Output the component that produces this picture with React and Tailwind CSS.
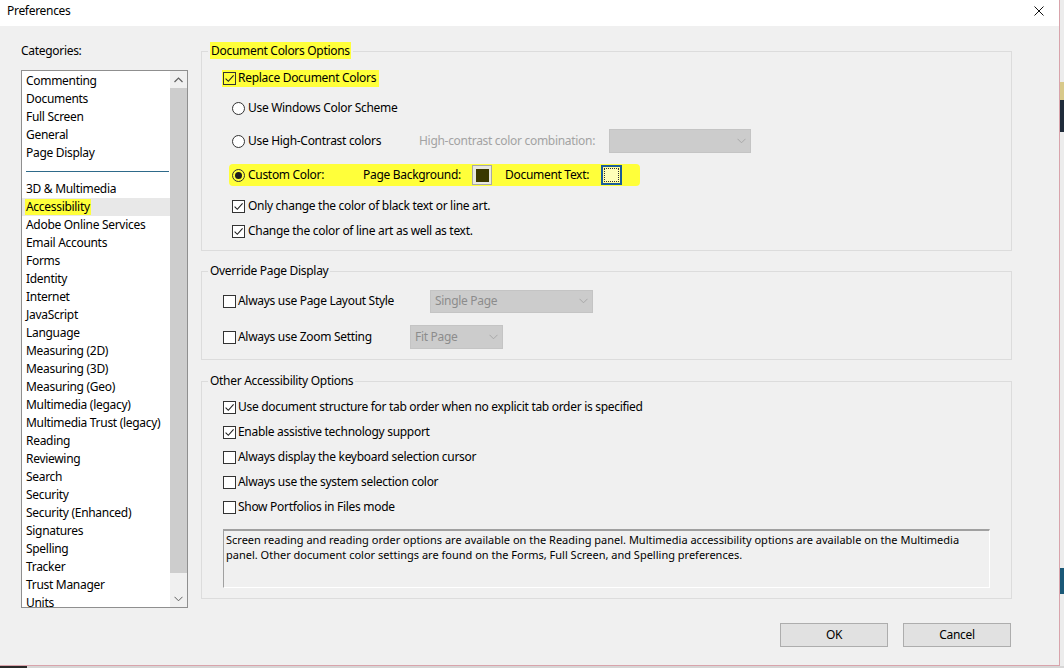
import React from 'react'

const font = { fontFamily: '"Segoe UI", "Noto Sans", sans-serif' }

const categories = [
  'Commenting', 'Documents', 'Full Screen', 'General', 'Page Display', '---',
  '3D & Multimedia', 'Accessibility', 'Adobe Online Services', 'Email Accounts', 'Forms',
  'Identity', 'Internet', 'JavaScript', 'Language', 'Measuring (2D)', 'Measuring (3D)',
  'Measuring (Geo)', 'Multimedia (legacy)', 'Multimedia Trust (legacy)', 'Reading',
  'Reviewing', 'Search', 'Security', 'Security (Enhanced)', 'Signatures', 'Spelling',
  'Tracker', 'Trust Manager', 'Units',
]

function Check({ checked, marked }) {
  return (
    <span className={'flex h-[13px] w-[13px] shrink-0 items-center justify-center border border-[#333333] ' + (marked ? 'bg-[#ffff3a]' : 'bg-white')}>
      {checked && (
        <svg width="11" height="11" viewBox="0 0 11 11">
          <path d="M1.6 5.6 L4.3 8.3 L9.6 2.4" fill="none" stroke="#1e1e1e" strokeWidth="1.1" />
        </svg>
      )}
    </span>
  )
}

function Radio({ checked, marked }) {
  return (
    <span className={'flex h-[13px] w-[13px] shrink-0 items-center justify-center rounded-full border border-[#333333] ' + (marked ? 'bg-[#ffff3a]' : 'bg-white')}>
      {checked && <span className="h-[7px] w-[7px] rounded-full bg-[#1e1e1e]" />}
    </span>
  )
}

function Chevron({ color = '#8a8a8a' }) {
  return (
    <svg width="9" height="6" viewBox="0 0 9 6">
      <path d="M0.5 0.8 L4.5 4.8 L8.5 0.8" fill="none" stroke={color} strokeWidth="1" />
    </svg>
  )
}

function DisabledSelect({ width, height, text }) {
  return (
    <div
      className="flex shrink-0 items-center border border-[#c4c4c4] bg-[#cccccc] text-[#8c8c8c]"
      style={{ width, height }}
    >
      <span className="flex-1 pl-[4px]">{text}</span>
      <span className="flex w-[18px] justify-center">
        <Chevron color="#a8a8a8" />
      </span>
    </div>
  )
}

function Row({ children, className = '' }) {
  return <div className={'flex h-[20px] items-center ' + className}>{children}</div>
}

function Group({ title, className, children }) {
  return (
    <fieldset className={'border border-[#dcdcdc] ' + className}>
      <legend className="ml-[6px] px-[2px] leading-[16px]">{title}</legend>
      {children}
    </fieldset>
  )
}

function CategoryList() {
  return (
    <div className="flex h-[538px] w-[167px] overflow-hidden border border-[#8f8f8f] bg-white">
      <div className="flex-1 pt-[1px]">
        {categories.map((c, i) =>
          c === '---' ? (
            <div key={i} className="flex h-[18px] items-center pl-[4px] pr-[1px]">
              <div className="h-px flex-1 bg-[#2e6a8a]" />
            </div>
          ) : c === 'Accessibility' ? (
            <div key={i} className="flex h-[18px] items-center bg-[#e8e8e8] pl-[3px]">
              <span className="bg-[#ffff3a] px-[1px] leading-[16px]">{c}</span>
            </div>
          ) : (
            <div key={i} className="h-[18px] whitespace-nowrap pl-[4px] leading-[18px]">{c}</div>
          )
        )}
      </div>
      <div className="flex w-[17px] flex-col bg-[#f0f0f0]">
        <div className="flex h-[17px] items-center justify-center">
          <svg width="9" height="6" viewBox="0 0 9 6">
            <path d="M0.5 5 L4.5 1 L8.5 5" fill="none" stroke="#606060" strokeWidth="1.2" />
          </svg>
        </div>
        <div className="h-[485px] bg-[#cdcdcd]" />
        <div className="flex-1" />
        <div className="flex h-[17px] items-center justify-center">
          <Chevron color="#606060" />
        </div>
      </div>
    </div>
  )
}

export default function App() {
  return (
    <div className="flex h-[668px] w-[1064px] flex-col overflow-hidden bg-[#d8d8d8] text-[12px] tracking-[-0.3px] text-black" style={font}>
      <div className="flex h-[666px]">
        <div className="flex w-[1060px] flex-col border-r border-b border-[#d9a3ab]">
          {/* title bar */}
          <div className="flex h-[26px] items-start justify-between bg-white pt-[3px] pl-[7px] pr-[15px]">
            <span className="leading-[16px]">Preferences</span>
            <svg className="mt-[3px]" width="10" height="10" viewBox="0 0 10 10">
              <path d="M0.5 0.5 L9.5 9.5 M9.5 0.5 L0.5 9.5" stroke="#111" strokeWidth="1" />
            </svg>
          </div>

          <div className="flex flex-1 bg-[#f0f0f0] pt-[17px] pl-[21px]">
            {/* categories */}
            <div className="flex w-[167px] flex-col">
              <div className="leading-[16px]">Categories:</div>
              <div className="mt-[11px]">
                <CategoryList />
              </div>
            </div>

            {/* settings */}
            <div className="ml-[13px] flex w-[811px] flex-col">
              <Group title={<span className="bg-[#ffff3a] px-[1px]">Document Colors Options</span>} className="h-[208px]">
                <div className="pt-[9px] pl-[21px]">
                  <Row>
                    <div className="-ml-[1px] flex h-[17px] items-center bg-[#ffff3a] pl-[1px] pr-[3px]">
                      <Check checked marked />
                      <span className="ml-[2px]">Replace Document Colors</span>
                    </div>
                  </Row>
                  <Row className="mt-[10px] pl-[9px]">
                    <Radio />
                    <span className="ml-[3px] w-[171px]">Use Windows Color Scheme</span>
                  </Row>
                  <Row className="mt-[13px] pl-[9px]">
                    <Radio />
                    <span className="ml-[3px] w-[171px]">Use High-Contrast colors</span>
                    <span className="w-[190px] text-[#a3a3a3]">High-contrast color combination:</span>
                    <DisabledSelect width={142} height={24} text="" />
                  </Row>
                  <Row className="mt-[14px]">
                    <div className="ml-[6px] flex h-[22px] w-[411px] items-center rounded-[4px] bg-[#ffff3a] pl-[3px]">
                      <Radio checked marked />
                      <span className="ml-[3px] w-[115px]">Custom Color:</span>
                      <span className="w-[109px]">Page Background:</span>
                      <span className="flex h-[20px] w-[20px] items-center justify-center border border-[#a8a8a8] bg-[#e8e8e0]">
                        <span className="h-[13px] w-[13px] bg-[#3a3800]" />
                      </span>
                      <span className="ml-[13px] w-[96px]">Document Text:</span>
                      <span className="flex h-[20px] w-[21px] items-center justify-center border-2 border-[#1a5c9a] bg-[#ffff9a]">
                        <span className="h-[14px] w-[15px] border border-dotted border-[#333] bg-[#ffffb8]" />
                      </span>
                    </div>
                  </Row>
                  <Row className="mt-[11px] pl-[9px]">
                    <Check checked />
                    <span className="ml-[3px]">Only change the color of black text or line art.</span>
                  </Row>
                  <Row className="mt-[5px] pl-[9px]">
                    <Check checked />
                    <span className="ml-[3px]">Change the color of line art as well as text.</span>
                  </Row>
                </div>
              </Group>

              <Group title="Override Page Display" className="mt-[12px] h-[97px]">
                <div className="pt-[12px] pl-[21px]">
                  <Row>
                    <Check />
                    <span className="ml-[2px] w-[192px]">Always use Page Layout Style</span>
                    <DisabledSelect width={163} height={23} text="Single Page" />
                  </Row>
                  <Row className="mt-[16px]">
                    <Check />
                    <span className="ml-[2px] w-[172px]">Always use Zoom Setting</span>
                    <DisabledSelect width={93} height={24} text="Fit Page" />
                  </Row>
                </div>
              </Group>

              <Group title="Other Accessibility Options" className="mt-[13px] h-[226px]">
                <div className="pt-[8px] pl-[21px]">
                  <div className="flex flex-col gap-[5px]">
                    <Row>
                      <Check checked />
                      <span className="ml-[2px]">Use document structure for tab order when no explicit tab order is specified</span>
                    </Row>
                    <Row>
                      <Check checked />
                      <span className="ml-[2px]">Enable assistive technology support</span>
                    </Row>
                    <Row>
                      <Check />
                      <span className="ml-[2px]">Always display the keyboard selection cursor</span>
                    </Row>
                    <Row>
                      <Check />
                      <span className="ml-[2px]">Always use the system selection color</span>
                    </Row>
                    <Row>
                      <Check />
                      <span className="ml-[2px]">Show Portfolios in Files mode</span>
                    </Row>
                  </div>
                  <div className="mt-[12px] h-[59px] w-[767px] border-t-2 border-l border-[#a0a0a0] border-r border-b border-r-white border-b-white bg-[#f0f0f0] pl-[2px] pt-[1px] text-[11px] leading-[15px] tracking-normal">
                    Screen reading and reading order options are available on the Reading panel. Multimedia accessibility options are available on the Multimedia panel. Other document color settings are found on the Forms, Full Screen, and Spelling preferences.
                  </div>
                </div>
              </Group>

              <div className="mt-[24px] flex justify-end gap-[15px] pr-[1px]">
                <button className="h-[24px] w-[108px] border border-[#adadad] bg-[#e1e1e1]">OK</button>
                <button className="h-[24px] w-[108px] border border-[#adadad] bg-[#e1e1e1]">Cancel</button>
              </div>
            </div>
          </div>
        </div>

        {/* sliver of the window behind */}
        <div className="flex flex-1 flex-col bg-[#ececec]">
          <div className="mt-[82px] h-[18px] bg-[#d8c98a]" />
          <div className="h-[32px] bg-[#1f2b3a]" />
          <div className="flex-1" />
          <div className="mb-[72px] h-[26px] bg-[#1a5877]" />
        </div>
      </div>
      <div className="flex h-[2px]">
        <div className="w-[27px] bg-[#2a2a2a]" />
        <div className="flex-1 bg-[#d6d6d6]" />
      </div>
    </div>
  )
}
